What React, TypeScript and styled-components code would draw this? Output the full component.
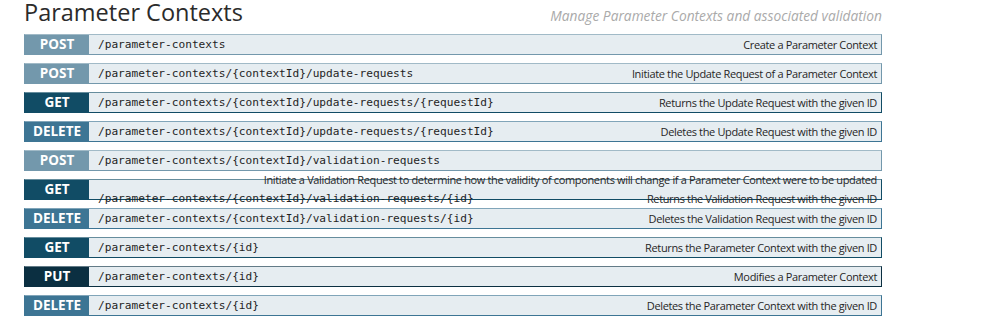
import React from 'react';
import styled, { createGlobalStyle } from 'styled-components';

type Method = 'GET' | 'POST' | 'PUT' | 'DELETE';

interface Endpoint {
  method: Method;
  path: string;
  summary: string;
}

const MethodColors: Record<Method, string> = {
  GET: '#114c65',
  POST: '#7398ac',
  PUT: '#0b2f41',
  DELETE: '#3d7594',
};

const endpoints: Endpoint[] = [
  { method: 'POST', path: '/parameter-contexts', summary: 'Create a Parameter Context' },
  { method: 'POST', path: '/parameter-contexts/{contextId}/update-requests', summary: 'Initiate the Update Request of a Parameter Context' },
  { method: 'GET', path: '/parameter-contexts/{contextId}/update-requests/{requestId}', summary: 'Returns the Update Request with the given ID' },
  { method: 'DELETE', path: '/parameter-contexts/{contextId}/update-requests/{requestId}', summary: 'Deletes the Update Request with the given ID' },
  {
    method: 'POST',
    path: '/parameter-contexts/{contextId}/validation-requests',
    summary: 'Initiate a Validation Request to determine how the validity of components will change if a Parameter Context were to be updated',
  },
  { method: 'GET', path: '/parameter-contexts/{contextId}/validation-requests/{id}', summary: 'Returns the Validation Request with the given ID' },
  { method: 'DELETE', path: '/parameter-contexts/{contextId}/validation-requests/{id}', summary: 'Deletes the Validation Request with the given ID' },
  { method: 'GET', path: '/parameter-contexts/{id}', summary: 'Returns the Parameter Context with the given ID' },
  { method: 'PUT', path: '/parameter-contexts/{id}', summary: 'Modifies a Parameter Context' },
  { method: 'DELETE', path: '/parameter-contexts/{id}', summary: 'Deletes the Parameter Context with the given ID' },
];

export default function App() {
  return (
    <>
      <GlobalStyle />
      <Page>
        <Header>
          <Title>Parameter Contexts</Title>
          <Subtitle>Manage Parameter Contexts and associated validation</Subtitle>
        </Header>
        {
          endpoints.map((ep, i) => {
            return (
              <Operation key={i} color={MethodColors[ep.method]}>
                <MethodLabel color={MethodColors[ep.method]}>{ep.method}</MethodLabel>
                <Path>{ep.path}</Path>
                <Summary>{ep.summary}</Summary>
              </Operation>
            );
          })
        }
      </Page>
    </>
  );
}

const GlobalStyle = createGlobalStyle`
  body {
    margin: 0;
    background: #ffffff;
    font-family: "Open Sans", "Liberation Sans", sans-serif;
    color: #333333;
  }
`;

const Page = styled('div')`
  width: 858px;
  padding: 0 0 0 24px;
`;

const Header = styled('div')`
  display: flex;
  justify-content: space-between;
  align-items: baseline;
  height: 30px;
  margin-bottom: 4px;
`;

const Title = styled('h2')`
  margin: 0;
  font-size: 23.5px;
  font-weight: 400;
  line-height: 24px;
  color: #2b2b2b;
`;

const Subtitle = styled('div')`
  font-size: 13.75px;
  font-style: italic;
  color: #aaaaaa;
`;

// 行の高さは固定、はみ出した説明文は次の行に重なる
const Operation = styled('div')<{ color: string }>`
  height: 19px;
  margin-bottom: 8px;
  background-color: #e6edf1;
  border: 1px solid ${(p) => p.color};
  border-top-color: ${(p) => p.color}99;
  font-size: 11px;
  line-height: 19px;
`;

const MethodLabel = styled('div')<{ color: string }>`
  float: left;
  width: 64px;
  height: 19px;
  background-color: ${(p) => p.color};
  color: #ffffff;
  font-size: 13.5px;
  font-weight: 700;
  text-align: center;
`;

const Path = styled('span')`
  display: inline-block;
  vertical-align: top;
  padding-left: 9px;
  white-space: nowrap;
  font-family: "DejaVu Sans Mono", "Liberation Mono", monospace;
  font-size: 11.15px;
  color: #1f1f1f;
`;

const Summary = styled('div')`
  float: right;
  padding-right: 4px;
  font-size: 11px;
  letter-spacing: -0.35px;
  color: #262626;
`;
